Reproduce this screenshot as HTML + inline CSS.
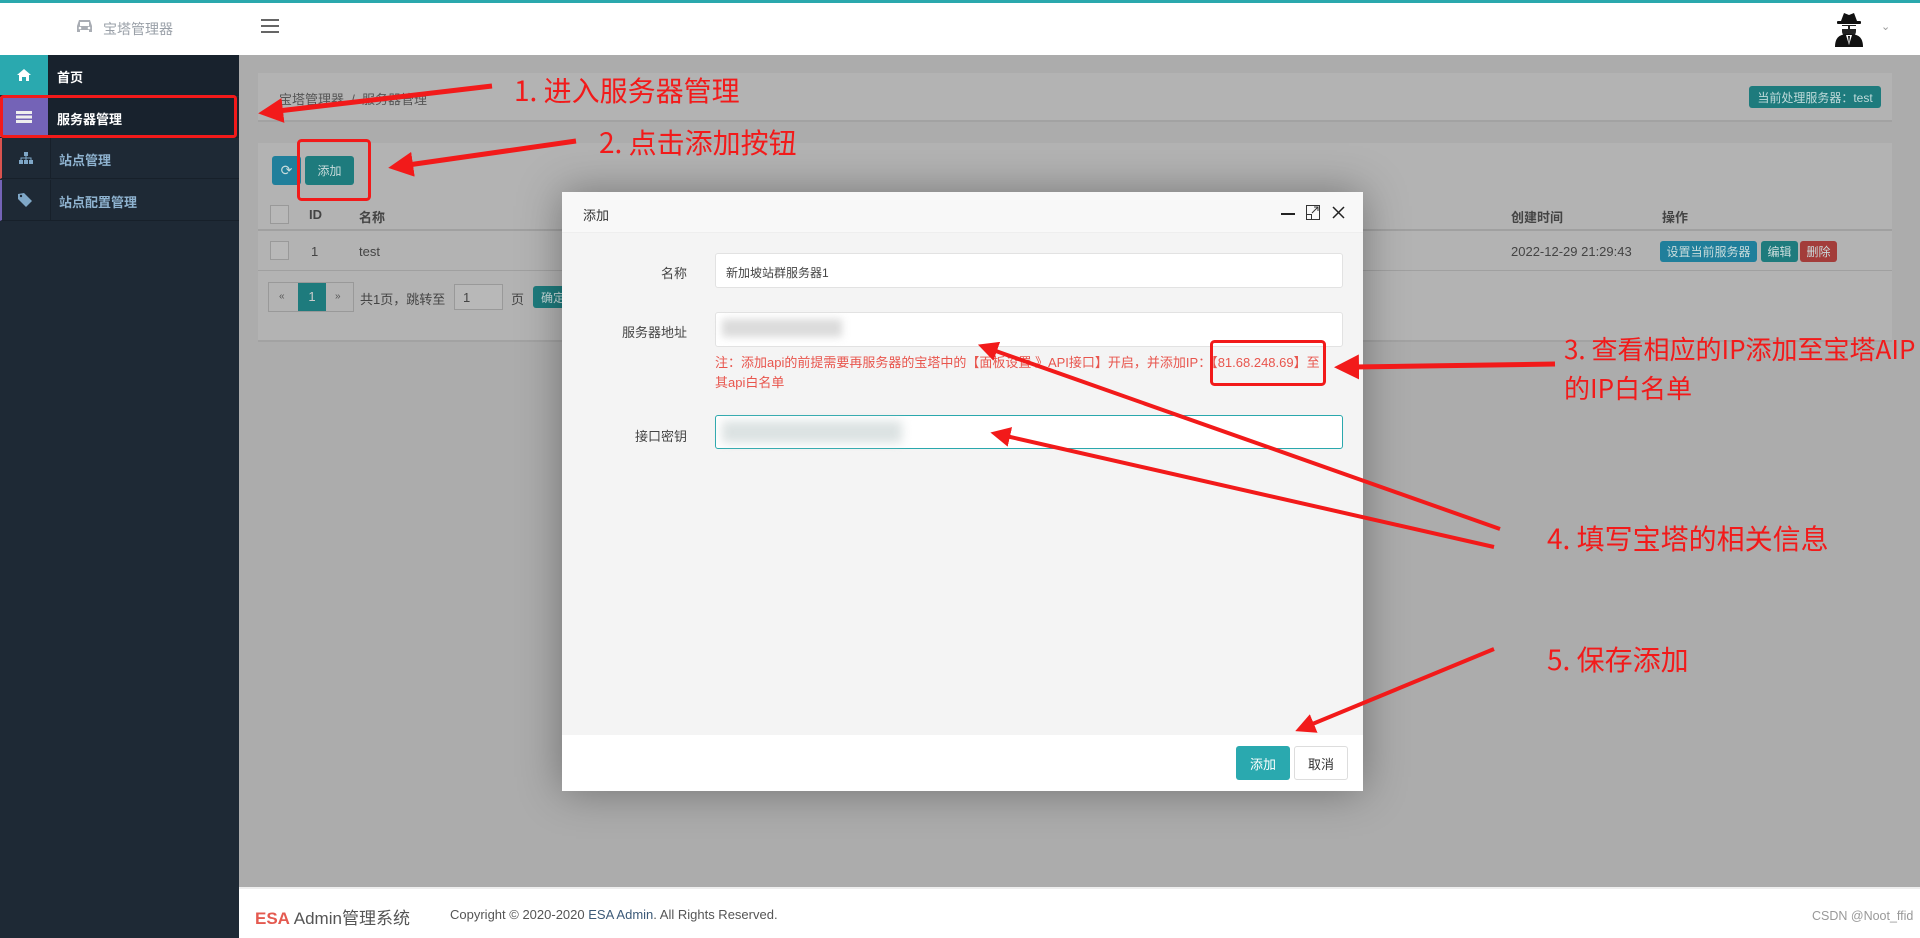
<!DOCTYPE html>
<html><head><meta charset="utf-8">
<style>
*{margin:0;padding:0;box-sizing:border-box}
body{width:1920px;height:938px;position:relative;overflow:hidden;font-family:"Liberation Sans","Noto Sans CJK SC",sans-serif;font-size:13px;background:#aaa;color:#333}
.abs{position:absolute}
.top{left:0;top:0;width:1920px;height:55px;background:#fff;border-top:3px solid #2aa8ad}
.side{left:0;top:55px;width:239px;height:883px;background:#1e2935}
.row{position:absolute;left:0;width:239px;height:41px;border-bottom:1px solid #17202a;color:#8fb3d0;font-weight:bold;font-size:13px}
.row .ic{position:absolute;left:0;top:0;width:49px;height:100%;border-right:1px solid #17202a;display:flex;align-items:center;justify-content:center}
.row span{position:absolute;left:57px;top:12px}
.content{left:239px;top:55px;width:1681px;height:834px;background:#acacac}
.panel{background:#b3b3b3;border-bottom:2px solid #a2a2a2}
.btn{position:absolute;border-radius:3px;color:#c9dcdc;font-size:12px;display:flex;align-items:center;justify-content:center}
.modal{left:562px;top:192px;width:801px;height:599px;background:#f4f4f4;box-shadow:0 0 40px rgba(0,0,0,.35)}
.lbl{position:absolute;right:676px;font-size:13px;color:#444;text-align:right;white-space:nowrap}
.inp{position:absolute;left:153px;width:628px;height:35px;background:#fff;border:1px solid #e2e2e2;border-radius:3px}
.ann{position:absolute;color:#f21a1a;font-size:28px;font-family:"Noto Sans CJK SC",sans-serif;white-space:nowrap;line-height:1}
</style></head><body>
<div class="abs top">
  <svg class="abs" style="left:76px;top:16px" width="17" height="15" viewBox="0 0 17 15"><path d="M3 1h11l2 6v6h-3v-2H4v2H1V7z" fill="#a9adb4"/><rect x="4" y="3" width="9" height="4" fill="#fff"/><circle cx="4" cy="9" r="1.3" fill="#fff"/><circle cx="13" cy="9" r="1.3" fill="#fff"/></svg>
  <div class="abs" style="left:103px;top:16px;font-size:14px;color:#9aa0a8">宝塔管理器</div>
  <div class="abs" style="left:261px;top:16px;width:18px;height:14px;border-top:2px solid #666;border-bottom:2px solid #666"><div style="margin-top:4px;height:2px;background:#666"></div></div>
  <svg class="abs" style="left:1832px;top:8px" width="34" height="36" viewBox="0 0 34 36"><path d="M9 10l3-8 5 2 5-2 3 8z" fill="#111"/><rect x="5" y="10" width="24" height="3" rx="1" fill="#111"/><path d="M10 14h14v6a7 7 0 01-14 0z" fill="#222"/><rect x="10" y="15" width="6" height="3" fill="#fff"/><rect x="18" y="15" width="6" height="3" fill="#fff"/><path d="M3 36c0-10 5-13 14-13s14 3 14 13z" fill="#111"/><path d="M14 24l3 10 3-10z" fill="#fff"/><path d="M16 25h2l-1 8z" fill="#111"/></svg>
  <div class="abs" style="left:1881px;top:17px;font-size:11px;color:#999">⌄</div>
</div>
<div class="abs side">
  <div class="row" style="top:0;background:#18222d;color:#fff"><div class="ic" style="background:#2aa9af"><svg width="14" height="12" viewBox="0 0 14 12"><path d="M7 0l7 6h-2v6H9V8H5v4H2V6H0z" fill="#fff"/></svg></div><span>首页</span></div>
  <div class="row" style="top:42px;background:#18222d;color:#fff"><div class="ic" style="background:#7463b7"><svg width="16" height="12"><rect width="16" height="3" fill="#eee"/><rect y="4.5" width="16" height="3" fill="#eee"/><rect y="9" width="16" height="3" fill="#eee"/></svg></div><span>服务器管理</span></div>
  <div class="row" style="top:83px;border-left:2px solid #d9534f"><div class="ic"><svg width="14" height="12"><rect x="5" y="0" width="4" height="4" fill="#7fa7c7"/><rect x="0" y="8" width="4" height="4" fill="#7fa7c7"/><rect x="5" y="8" width="4" height="4" fill="#7fa7c7"/><rect x="10" y="8" width="4" height="4" fill="#7fa7c7"/><path d="M2 8V6h10v2M7 4v4" stroke="#7fa7c7" fill="none"/></svg></div><span>站点管理</span></div>
  <div class="row" style="top:125px;border-left:2px solid #7463b7"><div class="ic"><svg width="16" height="14"><path d="M0 1v5l8 8 6-6-8-8z" fill="#7fa7c7"/><circle cx="3" cy="3" r="1.2" fill="#1e2935"/></svg></div><span>站点配置管理</span></div>
</div>
<div class="abs content">
  <div class="abs panel" style="left:19px;top:18px;width:1634px;height:49px">
    <div class="abs" style="left:21px;top:16px;color:#555;font-size:13px">宝塔管理器 &nbsp;/&nbsp; 服务器管理</div>
    <div class="btn" style="left:1491px;top:13px;width:132px;height:22px;background:#1e7b7d;color:#bfdada">当前处理服务器：test</div>
  </div>
  <div class="abs panel" style="left:19px;top:88px;width:1634px;height:199px">
    <div class="btn" style="left:14px;top:13px;width:29px;height:29px;background:#207f9b;font-size:14px">⟳</div>
    <div class="btn" style="left:47px;top:13px;width:49px;height:29px;background:#1e7b7d">添加</div>
    <div class="abs" style="left:0;top:53px;width:1634px;height:35px;border-bottom:2px solid #a0a0a0;font-weight:bold;color:#444">
      <div class="abs" style="left:12px;top:9px;width:19px;height:19px;border:1px solid #999;background:#b8b8b8"></div>
      <div class="abs" style="left:51px;top:11px">ID</div><div class="abs" style="left:101px;top:11px">名称</div>
      <div class="abs" style="left:1253px;top:11px">创建时间</div><div class="abs" style="left:1404px;top:11px">操作</div>
    </div>
    <div class="abs" style="left:0;top:90px;width:1634px;height:38px;border-bottom:1px solid #a0a0a0;color:#444">
      <div class="abs" style="left:12px;top:8px;width:19px;height:19px;border:1px solid #999;background:#b8b8b8"></div>
      <div class="abs" style="left:53px;top:11px">1</div><div class="abs" style="left:101px;top:11px">test</div>
      <div class="abs" style="left:1253px;top:11px">2022-12-29 21:29:43</div>
      <div class="btn" style="left:1402px;top:8px;width:97px;height:21px;background:#207f9b">设置当前服务器</div>
      <div class="btn" style="left:1503px;top:8px;width:37px;height:21px;background:#1e7b7d">编辑</div>
      <div class="btn" style="left:1542px;top:8px;width:37px;height:21px;background:#a33d3a">删除</div>
    </div>
    <div class="abs" style="left:10px;top:139px;width:86px;height:30px;border:1px solid #999;background:#b3b3b3"><div class="abs" style="left:10px;top:8px;font-size:10px;color:#555">«</div><div class="abs" style="left:29px;top:0;width:28px;height:28px;background:#1e7b7d;color:#ccc;text-align:center;line-height:28px">1</div><div class="abs" style="left:66px;top:8px;font-size:10px;color:#555">»</div></div>
    <div class="abs" style="left:102px;top:146px;color:#444">共1页，跳转至</div>
    <div class="abs" style="left:196px;top:141px;width:49px;height:26px;border:1px solid #999;background:#b8b8b8;padding:5px 8px;color:#444">1</div>
    <div class="abs" style="left:253px;top:146px;color:#444">页</div>
    <div class="btn" style="left:275px;top:143px;width:40px;height:22px;background:#1e7b7d">确定</div>
  </div>
</div>
<div class="abs modal">
  <div class="abs" style="left:0;top:0;width:801px;height:41px;background:#f8f8f8;border-bottom:1px solid #eee">
    <div class="abs" style="left:21px;top:13px;font-size:13px;color:#333">添加</div>
    <div class="abs" style="left:719px;top:21px;width:14px;height:2px;background:#222"></div>
    <svg class="abs" style="left:744px;top:13px" width="14" height="15"><rect x="0.5" y="0.5" width="13" height="14" fill="none" stroke="#333"/><rect x="0.5" y="9.5" width="5" height="5" fill="none" stroke="#333"/><path d="M6 8l6-6M8 2h4v4" stroke="#333" fill="none"/></svg>
    <svg class="abs" style="left:770px;top:14px" width="13" height="13"><path d="M1 1l11 11M12 1L1 12" stroke="#222" stroke-width="1.5"/></svg>
  </div>
  <div class="lbl" style="top:71px">名称</div>
  <div class="inp" style="top:61px;padding:10px 10px;font-size:12px;color:#444">新加坡站群服务器1</div>
  <div class="lbl" style="top:130px">服务器地址</div>
  <div class="inp" style="top:120px"><div class="abs" style="left:6px;top:6px;width:120px;height:18px;background:#ccc;filter:blur(4px);opacity:.7"></div></div>
  <div class="abs" style="left:153px;top:161px;width:660px;font-size:13px;line-height:20px;color:#e8554d;white-space:nowrap">注：添加api的前提需要再服务器的宝塔中的【面板设置 》API接口】开启，并添加IP：【81.68.248.69】至<br>其api白名单</div>
  <div class="lbl" style="top:234px">接口密钥</div>
  <div class="inp" style="top:223px;height:34px;border-color:#2aa8ad"><div class="abs" style="left:6px;top:5px;width:180px;height:22px;background:#cdd6d6;filter:blur(5px);opacity:.7"></div></div>
  <div class="abs" style="left:0;top:543px;width:801px;height:56px;background:#fff">
    <div class="btn" style="left:674px;top:11px;width:54px;height:34px;background:#2aa9af;color:#fff;font-size:13px">添加</div>
    <div class="btn" style="left:732px;top:11px;width:54px;height:34px;background:#fff;border:1px solid #ddd;color:#333;font-size:13px">取消</div>
  </div>
</div>
<div class="abs" style="left:239px;top:887px;width:1681px;height:51px;background:#fff;border-top:2px solid #eee">
  <div class="abs" style="left:16px;top:15px;font-size:17px;color:#555"><b style="color:#e45a50">ESA</b> Admin管理系统</div>
  <div class="abs" style="left:211px;top:18px;font-size:13px;color:#555">Copyright © 2020-2020 <span style="color:#3c5a78">ESA Admin</span>. All Rights Reserved.</div>
  <div class="abs" style="left:1573px;top:20px;font-size:12.5px;color:#999">CSDN @Noot_ffid</div>
</div>
<svg class="abs" style="left:0;top:0" width="1920" height="938">
<defs><marker id="a" markerWidth="5" markerHeight="5" refX="1" refY="2.5" orient="auto"><path d="M0 0L5 2.5 0 5z" fill="#f21a1a"/></marker></defs>
<g fill="none" stroke="#f21a1a">
<rect x="1.5" y="96.5" width="234" height="40" rx="2" stroke-width="3"/>
<rect x="298.5" y="140.5" width="71" height="59" rx="3" stroke-width="3"/>
<rect x="1211.5" y="341.5" width="113" height="43" rx="3" stroke-width="3"/>
<path d="M492 86L278 111" marker-end="url(#a)" stroke-width="5"/>
<path d="M576 141L408 165" marker-end="url(#a)" stroke-width="5"/>
<path d="M1555 364L1354 367" marker-end="url(#a)" stroke-width="5"/>
<path d="M1500 529L993 350" marker-end="url(#a)" stroke-width="4"/>
<path d="M1494 547L1006 436" marker-end="url(#a)" stroke-width="4"/>
<path d="M1494 649L1310 725" marker-end="url(#a)" stroke-width="4"/>
</g></svg>
<div class="ann" style="left:514px;top:76px">1. 进入服务器管理</div>
<div class="ann" style="left:599px;top:128px">2. 点击添加按钮</div>
<div class="ann" style="left:1564px;top:336px;font-size:26px">3. 查看相应的IP添加至宝塔AIP</div>
<div class="ann" style="left:1564px;top:375px;font-size:26px">的IP白名单</div>
<div class="ann" style="left:1547px;top:524px">4. 填写宝塔的相关信息</div>
<div class="ann" style="left:1547px;top:645px">5. 保存添加</div>
</body></html>
